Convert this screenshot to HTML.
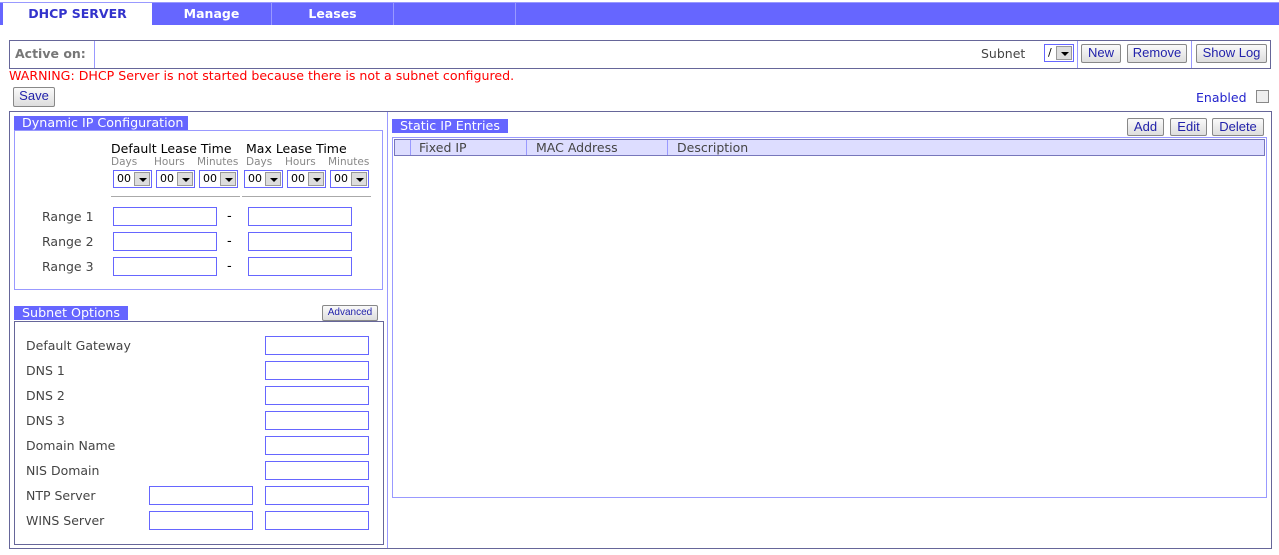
<!DOCTYPE html>
<html><head><style>
*{box-sizing:border-box;margin:0;padding:0}
body{width:1279px;height:555px;background:#fff;font-family:"DejaVu Sans","Liberation Sans",sans-serif;font-size:13px;position:relative;overflow:hidden;color:#444}
.a{position:absolute}
.btn{position:absolute;border:1px solid #888;border-radius:2px;background:linear-gradient(#fafafa,#ddd);color:#2222aa;font-family:"Liberation Sans",sans-serif;font-size:13px;text-align:center;line-height:16px}
.inp{position:absolute;width:104px;height:19px;border:1px solid #6666ff}
.sel{position:absolute;width:39px;height:18px;border:1px solid #6666ff;font-size:11px;color:#000;padding-left:3px;line-height:16px}
.sel i{position:absolute;right:1px;top:1px;width:16px;height:14px;background:#ddd;border:1px solid #999}
.sel i:after{content:"";position:absolute;left:4px;top:5px;border:4px solid transparent;border-top:4px solid #000;border-bottom:0}
.ttl{position:absolute;background:#6666ff;color:#fff;font-size:12.7px;padding-left:8px;line-height:14px;height:14px}
.lbl{position:absolute;font-size:12.5px;color:#444}
.sm{position:absolute;font-size:10.5px;color:#888}
</style></head><body>
<div class="a" style="left:0;top:2px;width:1279px;height:23px;background:#6666ff;border-top:1px solid #9999ff"></div>
<div class="a" style="left:3px;top:3px;width:149px;height:22px;background:#fff;color:#3333cc;font-weight:bold;text-align:center;line-height:22px;font-size:12.5px">DHCP SERVER</div>
<div class="a" style="left:152px;top:3px;width:120px;height:22px;color:#fff;font-weight:bold;text-align:center;line-height:22px;font-size:12.5px;border-right:1px solid #9999ff">Manage</div>
<div class="a" style="left:272px;top:3px;width:122px;height:22px;color:#fff;font-weight:bold;text-align:center;line-height:22px;font-size:12.5px;border-right:1px solid #9999ff">Leases</div>
<div class="a" style="left:394px;top:3px;width:122px;height:22px;border-right:1px solid #9999ff"></div>

<div class="a" style="left:9px;top:40px;width:1262px;height:29px;border:1px solid #666699"></div>
<div class="a" style="left:94px;top:41px;width:1px;height:27px;background:#9999ff"></div>
<div class="a" style="left:15px;top:46px;font-weight:bold;color:#777;font-size:12.5px">Active on:</div>
<div class="lbl" style="left:981px;top:46px">Subnet</div>
<div class="sel" style="left:1044px;top:44px;width:30px">/<i></i></div>
<div class="a" style="left:1077px;top:41px;width:1px;height:27px;background:#9999ff"></div>
<div class="btn" style="left:1081px;top:44px;width:40px;height:19px">New</div>
<div class="btn" style="left:1127px;top:44px;width:60px;height:19px">Remove</div>
<div class="a" style="left:1191px;top:41px;width:1px;height:27px;background:#9999ff"></div>
<div class="btn" style="left:1196px;top:44px;width:71px;height:19px">Show Log</div>

<div class="a" style="left:9px;top:68px;color:#ff0000;font-size:12.6px">WARNING: DHCP Server is not started because there is not a subnet configured.</div>
<div class="btn" style="left:13px;top:87px;width:42px;height:20px">Save</div>
<div class="a" style="left:1196px;top:90px;color:#2222cc;font-size:12.5px">Enabled</div>
<div class="a" style="left:1256px;top:90px;width:13px;height:13px;border:1px solid #888;background:#eee"></div>

<div class="a" style="left:9px;top:111px;width:1263px;height:438px;border:1px solid #666699"></div>
<div class="a" style="left:387px;top:112px;width:1px;height:436px;background:#9999ff"></div>

<div class="ttl" style="left:14px;top:116px;width:174px">Dynamic IP Configuration</div>
<div class="a" style="left:14px;top:130px;width:369px;height:160px;border:1px solid #9999ff"></div>
<div class="a" style="left:111px;top:141px;color:#000;font-size:12.5px">Default Lease Time</div>
<div class="a" style="left:246px;top:141px;color:#000;font-size:12.5px">Max Lease Time</div>
<div class="sm" style="left:111px;top:156px">Days</div><div class="sm" style="left:154px;top:156px">Hours</div><div class="sm" style="left:197px;top:156px">Minutes</div>
<div class="sm" style="left:246px;top:156px">Days</div><div class="sm" style="left:285px;top:156px">Hours</div><div class="sm" style="left:328px;top:156px">Minutes</div>
<div class="sel" style="left:113px;top:170px">00<i></i></div>
<div class="sel" style="left:156px;top:170px">00<i></i></div>
<div class="sel" style="left:199px;top:170px">00<i></i></div>
<div class="sel" style="left:244px;top:170px">00<i></i></div>
<div class="sel" style="left:287px;top:170px">00<i></i></div>
<div class="sel" style="left:330px;top:170px">00<i></i></div>
<div class="a" style="left:111px;top:196px;width:129px;height:1px;background:#aaa"></div>
<div class="a" style="left:242px;top:196px;width:129px;height:1px;background:#aaa"></div>
<div class="lbl" style="left:42px;top:209px">Range 1</div><div class="inp" style="left:113px;top:207px"></div><div class="a" style="left:227px;top:209px;color:#000">-</div><div class="inp" style="left:248px;top:207px"></div>
<div class="lbl" style="left:42px;top:234px">Range 2</div><div class="inp" style="left:113px;top:232px"></div><div class="a" style="left:227px;top:234px;color:#000">-</div><div class="inp" style="left:248px;top:232px"></div>
<div class="lbl" style="left:42px;top:259px">Range 3</div><div class="inp" style="left:113px;top:257px"></div><div class="a" style="left:227px;top:259px;color:#000">-</div><div class="inp" style="left:248px;top:257px"></div>

<div class="ttl" style="left:14px;top:306px;width:114px">Subnet Options</div>
<div class="btn" style="left:322px;top:305px;width:56px;height:16px;font-size:10px;line-height:13px">Advanced</div>
<div class="a" style="left:14px;top:321px;width:370px;height:224px;border:1px solid #666699"></div>
<div class="lbl" style="left:26px;top:338px">Default Gateway</div><div class="inp" style="left:265px;top:336px"></div>
<div class="lbl" style="left:26px;top:363px">DNS 1</div><div class="inp" style="left:265px;top:361px"></div>
<div class="lbl" style="left:26px;top:388px">DNS 2</div><div class="inp" style="left:265px;top:386px"></div>
<div class="lbl" style="left:26px;top:413px">DNS 3</div><div class="inp" style="left:265px;top:411px"></div>
<div class="lbl" style="left:26px;top:438px">Domain Name</div><div class="inp" style="left:265px;top:436px"></div>
<div class="lbl" style="left:26px;top:463px">NIS Domain</div><div class="inp" style="left:265px;top:461px"></div>
<div class="lbl" style="left:26px;top:488px">NTP Server</div><div class="inp" style="left:149px;top:486px"></div><div class="inp" style="left:265px;top:486px"></div>
<div class="lbl" style="left:26px;top:513px">WINS Server</div><div class="inp" style="left:149px;top:511px"></div><div class="inp" style="left:265px;top:511px"></div>

<div class="ttl" style="left:392px;top:119px;width:116px">Static IP Entries</div>
<div class="btn" style="left:1127px;top:118px;width:37px;height:18px">Add</div>
<div class="btn" style="left:1170px;top:118px;width:37px;height:18px">Edit</div>
<div class="btn" style="left:1212px;top:118px;width:52px;height:18px">Delete</div>
<div class="a" style="left:392px;top:137px;width:875px;height:361px;border:1px solid #9999ff"></div>
<div class="a" style="left:394px;top:139px;width:871px;height:17px;background:#ddddff;border:1px solid #7777bb"></div>
<div class="a" style="left:410px;top:140px;width:1px;height:15px;background:#9999ff"></div>
<div class="a" style="left:526px;top:140px;width:1px;height:15px;background:#9999ff"></div>
<div class="a" style="left:667px;top:140px;width:1px;height:15px;background:#9999ff"></div>
<div class="lbl" style="left:419px;top:140px">Fixed IP</div>
<div class="lbl" style="left:536px;top:140px">MAC Address</div>
<div class="lbl" style="left:677px;top:140px">Description</div>
</body></html>
